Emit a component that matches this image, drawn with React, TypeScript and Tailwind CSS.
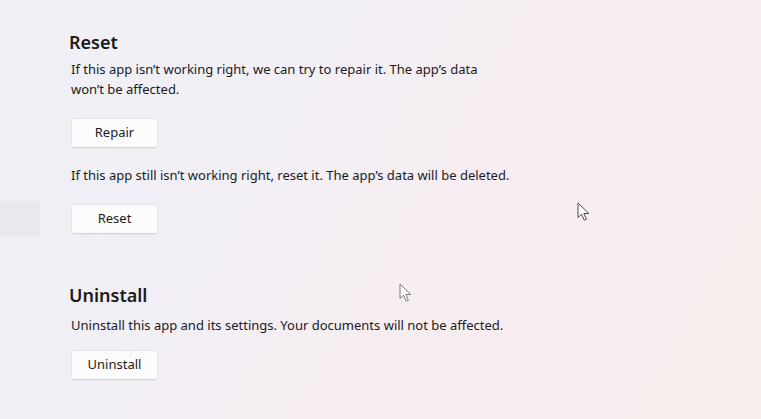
import React from 'react';

const Cursor: React.FC<{ className?: string }> = ({ className }) => (
  <svg className={className} width="13" height="20" viewBox="0 0 13 20" fill="none">
    <path
      d="M1 1 L1 15.5 L4.6 12.3 L7.2 18.2 L9.4 17.2 L6.9 11.5 L11.8 11.5 Z"
      fill="#ffffff"
      stroke="#4a4a4a"
      strokeWidth="1"
      strokeLinejoin="round"
    />
  </svg>
);

const Button: React.FC<{ label: string }> = ({ label }) => (
  <button className="w-[87px] h-[30px] rounded-[4px] bg-[#fcfcfd] border border-[#e6e4e8] border-b-[#d6d3d8] text-[13px] text-[#1b1b1b] shadow-[0_1px_1px_rgba(0,0,0,0.03)]">
    {label}
  </button>
);

const App: React.FC = () => {
  return (
    <div
      className="relative w-[761px] h-[419px] overflow-hidden flex bg-[linear-gradient(120deg,#eef0f6_0%,#f2eff5_35%,#f7edf1_65%,#f7eeec_100%)] text-[#1b1b1b]"
      style={{ fontFamily: '"Noto Sans", "Open Sans", sans-serif' }}
    >
      {/* sidebar remnant */}
      <div className="w-10 shrink-0 pt-[201px]">
        <div className="h-[36px] w-[40px] rounded-r-[4px] bg-[#e9e8ee]" />
      </div>

      {/* Main content */}
      <div className="pl-[29px] pt-[28px] flex flex-col">
        <h2 className="text-[18px] leading-[28px] font-semibold">Reset</h2>
        <p className="mt-[3px] ml-[2px] text-[13px] leading-[20px]">
          If this app isn’t working right, we can try to repair it. The app’s data
          <br />
          won’t be affected.
        </p>
        <div className="mt-[19px] ml-[2px]">
          <Button label="Repair" />
        </div>
        <p className="mt-[17px] ml-[2px] text-[13px] leading-[20px]">
          If this app still isn’t working right, reset it. The app’s data will be deleted.
        </p>
        <div className="mt-[19px] ml-[2px]">
          <Button label="Reset" />
        </div>

        <h2 className="mt-[47px] text-[18px] leading-[28px] font-semibold">Uninstall</h2>
        <p className="mt-[6px] ml-[2px] text-[13px] leading-[20px]">
          Uninstall this app and its settings. Your documents will not be affected.
        </p>
        <div className="mt-[15px] ml-[2px]">
          <Button label="Uninstall" />
        </div>
      </div>

      {/* mouse pointers */}
      <Cursor className="absolute left-[577px] top-[202px]" />
      <Cursor className="absolute left-[399px] top-[283px] opacity-70" />
    </div>
  );
};

export default App;
